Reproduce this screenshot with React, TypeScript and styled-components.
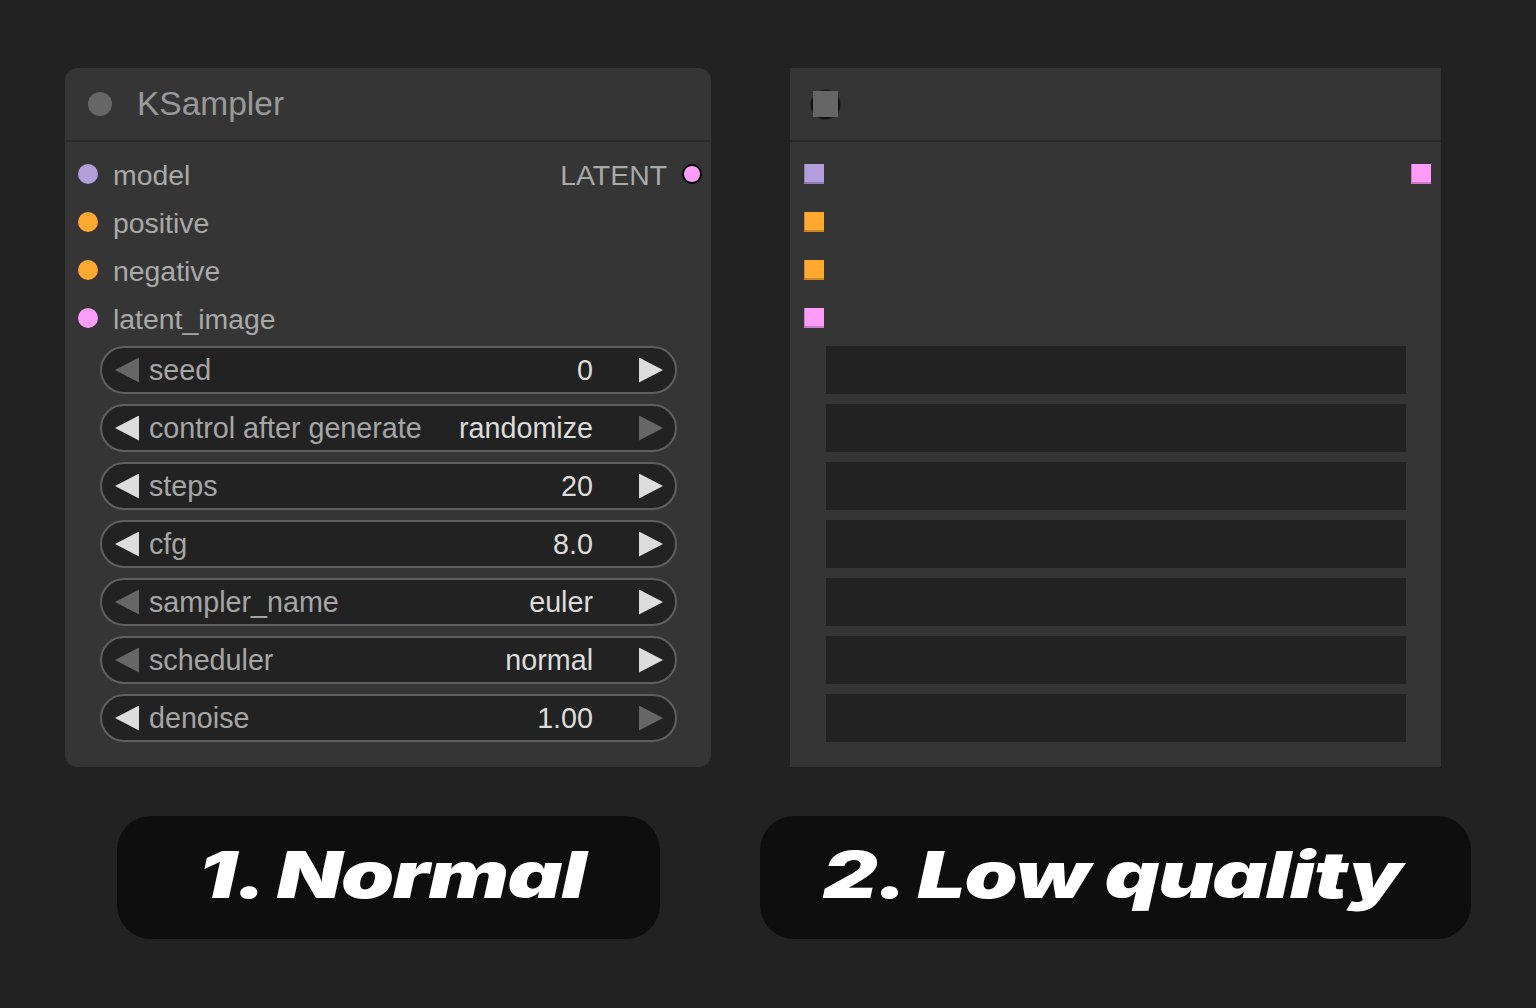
import React from "react";
import styled, { createGlobalStyle } from "styled-components";

const Global = createGlobalStyle`
  html, body { margin: 0; padding: 0; background: #222222; }
  body { font-family: "Liberation Sans", Arial, sans-serif; }
`;

const Page = styled.div`
  width: 1536px;
  height: 1008px;
  box-sizing: border-box;
  padding: 68px 0 0 65px;
  display: flex;
  flex-direction: row;
  gap: 79px;
  background: #222222;
`;

const Column = styled.div<{ $w: number }>`
  width: ${(p) => p.$w}px;
  display: flex;
  flex-direction: column;
  align-items: center;
  gap: 49px;
`;

const Node = styled.div<{ $round?: boolean }>`
  width: 100%;
  height: 699px;
  background: #353535;
  border-radius: ${(p) => (p.$round ? "12px" : "0")};
  display: flex;
  flex-direction: column;
  overflow: hidden;
`;

const TitleBar = styled.div`
  height: 72px;
  flex-shrink: 0;
  display: flex;
  align-items: center;
  padding-left: 23px;
  gap: 25px;
  border-bottom: 2px solid #2b2b2b;
`;

const TitleDot = styled.span`
  width: 24px;
  height: 24px;
  border-radius: 50%;
  background: #666666;
`;

const TitleText = styled.span`
  font-size: 33.5px;
  color: #999999;
  line-height: 1;
  margin-top: -1px;
`;

const LQTitleBar = styled.div`
  height: 72px;
  flex-shrink: 0;
  display: flex;
  align-items: center;
  padding-left: 20px;
  border-bottom: 2px solid #2b2b2b;
`;

const LQMarkHalo = styled.span`
  width: 31px;
  height: 31px;
  border-radius: 50%;
  background: radial-gradient(circle, #0c0c0c 62%, rgba(12, 12, 12, 0) 72%);
  display: flex;
  align-items: center;
  justify-content: center;
`;

const LQMarkSquare = styled.span`
  width: 25px;
  height: 26px;
  background: #666666;
`;

const Body = styled.div`
  padding: 8px 0 25px 0;
  display: flex;
  flex-direction: column;
`;

const SlotRow = styled.div<{ $pl: number; $pr: number }>`
  height: 48px;
  display: flex;
  align-items: center;
  justify-content: space-between;
  padding: 0 ${(p) => p.$pr}px 0 ${(p) => p.$pl}px;
`;

const SlotSide = styled.div`
  display: flex;
  align-items: center;
  gap: 15px;
`;

const Dot = styled.span<{ $c: string; $ring?: boolean }>`
  width: 20px;
  height: 20px;
  box-sizing: border-box;
  border-radius: 50%;
  background: ${(p) => p.$c};
  border: ${(p) => (p.$ring ? "2px solid #000" : "none")};
`;

const Square = styled.span<{ $c: string }>`
  width: 20px;
  height: 20px;
  box-sizing: border-box;
  background: ${(p) => p.$c};
  border-left: 1px solid rgba(0, 0, 0, 0.2);
  border-bottom: 2px solid rgba(0, 0, 0, 0.2);
`;

const SlotLabel = styled.span`
  font-size: 28.4px;
  color: #a9a9a9;
  line-height: 1;
  margin-top: 2px;
`;

const Widgets = styled.div<{ $pl: number; $pr: number }>`
  margin-top: 4px;
  padding: 0 ${(p) => p.$pr}px 0 ${(p) => p.$pl}px;
  display: flex;
  flex-direction: column;
  gap: 10px;
`;

const Widget = styled.div`
  height: 48px;
  box-sizing: border-box;
  border: 2px solid #5f5f5f;
  border-radius: 24px;
  background: #222222;
  display: flex;
  align-items: center;
  padding: 0 12px 0 13px;
`;

const Arrow = styled.span<{ $dir: "l" | "r"; $on: boolean }>`
  width: 24px;
  height: 25px;
  flex-shrink: 0;
  background: ${(p) => (p.$on ? "#dddddd" : "#666666")};
  clip-path: ${(p) =>
    p.$dir === "l"
      ? "polygon(0 50%, 100% 0, 100% 100%)"
      : "polygon(0 0, 100% 50%, 0 100%)"};
`;

const WLabel = styled.span`
  margin-left: 10px;
  font-size: 28.7px;
  color: #a6a6a6;
  flex: 1;
  white-space: nowrap;
`;

const WValue = styled.span`
  font-size: 28.7px;
  color: #dddddd;
  margin-right: 46px;
  white-space: nowrap;
`;

const LQWidget = styled.div`
  height: 48px;
  background: #222222;
`;

const Pill = styled.div<{ $w: number }>`
  width: ${(p) => p.$w}px;
  height: 123px;
  border-radius: 34px;
  background: #0e0e0e;
  display: flex;
  align-items: center;
  justify-content: center;
`;

const PillText = styled.span<{ $dx: number }>`
  display: inline-block;
  font-family: "Inter", "Liberation Sans", sans-serif;
  font-weight: 900;
  font-style: italic;
  font-size: 65px;
  letter-spacing: -1px;
  color: #ffffff;
  line-height: 1;
  transform: translateX(${(p) => p.$dx}px) scaleX(1.31);
  margin-top: -6px;
  white-space: nowrap;
`;

const inputs = [
  { name: "model", c: "#b39ddb" },
  { name: "positive", c: "#ffa931" },
  { name: "negative", c: "#ffa931" },
  { name: "latent_image", c: "#ff9cf9" },
];

const widgets: { label: string; value: string; l: boolean; r: boolean }[] = [
  { label: "seed", value: "0", l: false, r: true },
  { label: "control after generate", value: "randomize", l: true, r: false },
  { label: "steps", value: "20", l: true, r: true },
  { label: "cfg", value: "8.0", l: true, r: true },
  { label: "sampler_name", value: "euler", l: false, r: true },
  { label: "scheduler", value: "normal", l: false, r: true },
  { label: "denoise", value: "1.00", l: true, r: false },
];

export default function App() {
  return (
    <>
      <Global />
      <Page>
        <Column $w={646}>
          <Node $round>
            <TitleBar>
              <TitleDot />
              <TitleText>KSampler</TitleText>
            </TitleBar>
            <Body>
              {inputs.map((s, i) => (
                <SlotRow key={s.name} $pl={13} $pr={9}>
                  <SlotSide>
                    <Dot $c={s.c} />
                    <SlotLabel>{s.name}</SlotLabel>
                  </SlotSide>
                  {i === 0 && (
                    <SlotSide>
                      <SlotLabel>LATENT</SlotLabel>
                      <Dot $c="#ff9cf9" $ring />
                    </SlotSide>
                  )}
                </SlotRow>
              ))}
              <Widgets $pl={35} $pr={34}>
                {widgets.map((w) => (
                  <Widget key={w.label}>
                    <Arrow $dir="l" $on={w.l} />
                    <WLabel>{w.label}</WLabel>
                    <WValue>{w.value}</WValue>
                    <Arrow $dir="r" $on={w.r} />
                  </Widget>
                ))}
              </Widgets>
            </Body>
          </Node>
          <Pill $w={543}>
            <PillText $dx={4}>1. Normal</PillText>
          </Pill>
        </Column>
        <Column $w={651}>
          <Node>
            <LQTitleBar>
              <LQMarkHalo>
                <LQMarkSquare />
              </LQMarkHalo>
            </LQTitleBar>
            <Body>
              {inputs.map((s, i) => (
                <SlotRow key={s.name} $pl={14} $pr={10}>
                  <Square $c={s.c} />
                  {i === 0 && <Square $c="#ff9cf9" />}
                </SlotRow>
              ))}
              <Widgets $pl={36} $pr={35}>
                {widgets.map((w) => (
                  <LQWidget key={w.label} />
                ))}
              </Widgets>
            </Body>
          </Node>
          <Pill $w={711}>
            <PillText $dx={-4}>2. Low quality</PillText>
          </Pill>
        </Column>
      </Page>
    </>
  );
}
